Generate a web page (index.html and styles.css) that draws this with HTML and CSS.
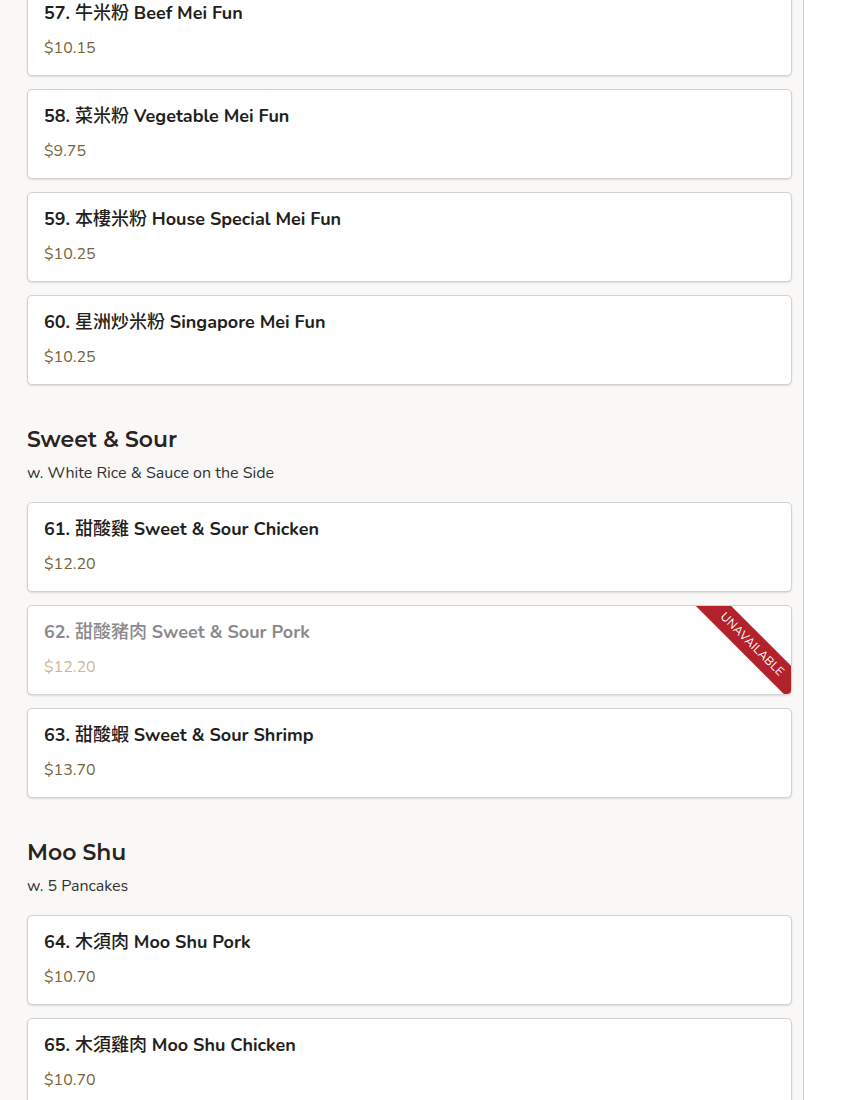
FILE: index.html
```html
<!DOCTYPE html>
<html lang="en">
<head>
<meta charset="utf-8">
<title>Menu</title>
<link rel="stylesheet" href="styles.css">
</head>
<body>
<div class="menu">
  <div class="list first">
    <div class="card"><div class="title">57. <span lang="zh-Hant">牛米粉</span> Beef Mei Fun</div><div class="price">$10.15</div></div>
    <div class="card"><div class="title">58. <span lang="zh-Hant">菜米粉</span> Vegetable Mei Fun</div><div class="price">$9.75</div></div>
    <div class="card"><div class="title">59. <span lang="zh-Hant">本樓米粉</span> House Special Mei Fun</div><div class="price">$10.25</div></div>
    <div class="card"><div class="title">60. <span lang="zh-Hant">星洲炒米粉</span> Singapore Mei Fun</div><div class="price">$10.25</div></div>
  </div>

  <section class="category">
    <h2 class="cat-title">Sweet &amp; Sour</h2>
    <p class="cat-desc">w. White Rice &amp; Sauce on the Side</p>
    <div class="list">
      <div class="card"><div class="title">61. <span lang="zh-Hant">甜酸雞</span> Sweet &amp; Sour Chicken</div><div class="price">$12.20</div></div>
      <div class="card unavailable"><div class="title">62. <span lang="zh-Hant">甜酸豬肉</span> Sweet &amp; Sour Pork</div><div class="price">$12.20</div><div class="ribbon">Unavailable</div></div>
      <div class="card"><div class="title">63. <span lang="zh-Hant">甜酸蝦</span> Sweet &amp; Sour Shrimp</div><div class="price">$13.70</div></div>
    </div>
  </section>

  <section class="category">
    <h2 class="cat-title">Moo Shu</h2>
    <p class="cat-desc">w. 5 Pancakes</p>
    <div class="list">
      <div class="card"><div class="title">64. <span lang="zh-Hant">木須肉</span> Moo Shu Pork</div><div class="price">$10.70</div></div>
      <div class="card"><div class="title">65. <span lang="zh-Hant">木須雞肉</span> Moo Shu Chicken</div><div class="price">$10.70</div></div>
    </div>
  </section>
</div>
</body>
</html>
```

FILE: styles.css
```css
html, body {
  margin: 0;
  padding: 0;
  background: #ffffff;
}

body {
  font-family: "Nunito", "Lato", "Noto Sans CJK TC", sans-serif;
  color: #241f1c;
  overflow: hidden;
  height: 1100px;
}

.menu {
  width: 765px;
  padding: 0 11px 40px 27px;
  background: #f9f8f6;
  border-right: 1px solid #cfcfcf;
  min-height: 1200px;
}

.list {
  display: flex;
  flex-direction: column;
  gap: 13px;
}

.list.first {
  margin-top: -14px;
}

.card {
  position: relative;
  overflow: hidden;
  background: #ffffff;
  border: 1px solid #d2d2d2;
  border-radius: 5px;
  box-shadow: 0 1px 2px rgba(0, 0, 0, 0.12);
  padding: 14px 16px 16px 16px;
  display: flex;
  flex-direction: column;
  gap: 12px;
}

.title {
  font-size: 18px;
  line-height: 24px;
  height: 24px;
  font-weight: 700;
  color: #241f1c;
  white-space: nowrap;
}

.title span {
  font-family: "Noto Sans CJK TC", sans-serif;
  font-weight: 500;
  line-height: 1;
}

.price {
  font-size: 16px;
  line-height: 22px;
  color: #77643a;
}

.unavailable .title {
  color: #8b8b8b;
}

.unavailable .price {
  color: #cbb893;
}

.ribbon {
  position: absolute;
  top: 26px;
  right: -36px;
  width: 150px;
  height: 25px;
  line-height: 25px;
  background: #b3212a;
  color: #ffffff;
  font-size: 12px;
  letter-spacing: 0.2px;
  text-transform: uppercase;
  text-align: center;
  transform: rotate(45deg);
}

.category {
  padding-top: 40px;
}

.cat-title {
  margin: 0;
  font-family: "Montserrat", "Inter", sans-serif;
  font-size: 22px;
  line-height: 30px;
  font-weight: 600;
  color: #2a2320;
}

.cat-desc {
  margin: 7px 0 18px 0;
  font-size: 16px;
  line-height: 22px;
  color: #333333;
}
```
